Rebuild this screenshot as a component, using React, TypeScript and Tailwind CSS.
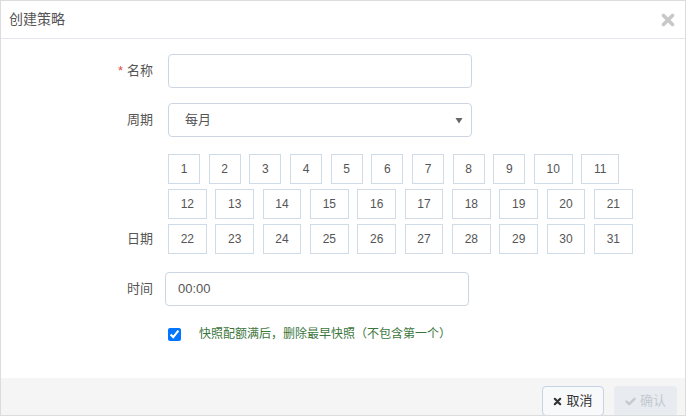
const days = Array.from({ length: 31 }, (_, i) => i + 1)

function Label({ children, required }: { children: React.ReactNode; required?: boolean }) {
  return (
    <div className="w-[152px] shrink-0 text-right text-[13px] text-[#555]">
      {required && <span className="text-[#e5484d] mr-1">*</span>}
      {children}
    </div>
  )
}

export default function App() {
  return (
    <div
      className="w-[686px] h-[416px] bg-white border border-[#dcdcdc] flex flex-col overflow-hidden"
      style={{ fontFamily: '"Liberation Sans", "Noto Sans CJK SC", sans-serif' }}
    >
      {/* Header */}
      <div className="h-[38px] shrink-0 border-b border-[#e3e6ea] flex items-center justify-between pl-2 pr-[10px]">
        <h1 className="text-[14px] text-[#555]">创建策略</h1>
        <svg className="w-[14px] h-[14px]" viewBox="0 0 14 14" aria-hidden="true">
          <path d="M2.5 2.5 L11.5 11.5 M11.5 2.5 L2.5 11.5" stroke="#c8c8c8" strokeWidth={3.6} strokeLinecap="round" />
        </svg>
      </div>

      {/* Body */}
      <div className="flex-1 pt-[15px]">
        <div className="flex items-center h-[34px]">
          <Label required>名称</Label>
          <input className="ml-[15px] w-[304px] h-[34px] rounded border border-[#ccd6e1] px-3 text-[13px] outline-none" />
        </div>

        <div className="flex items-center h-[34px] mt-[15px]">
          <Label>周期</Label>
          <div className="ml-[15px] w-[304px] h-[34px] rounded border border-[#ccd6e1] pl-4 pr-[8px] flex items-center justify-between text-[13px] text-[#555]">
            <span>每月</span>
            <svg className="w-[8px] h-[7px]" viewBox="0 0 8 7" aria-hidden="true">
              <path d="M0.5 1 L7.5 1 L4 6.5 Z" fill="#666" />
            </svg>
          </div>
        </div>

        <div className="flex items-end mt-[17px]">
          <div className="h-[30px] flex items-center">
            <Label>日期</Label>
          </div>
          <div className="ml-[15px] w-[485px] flex flex-wrap gap-x-[8.6px] gap-y-[5px]">
            {days.map(d => (
              <div
                key={d}
                className="h-[30px] px-[11.7px] border border-[#cfdbe7] flex items-center justify-center text-[12px] text-[#555]"
              >
                {d}
              </div>
            ))}
          </div>
        </div>

        <div className="flex items-center h-[34px] mt-[18px]">
          <Label>时间</Label>
          <div className="ml-[12px] w-[304px] h-[34px] rounded border border-[#ccd6e1] pl-3 flex items-center text-[13px] text-[#555]">
            00:00
          </div>
        </div>

        <div className="flex items-center mt-[19px] ml-[167px]">
          <input type="checkbox" checked readOnly className="w-[13px] h-[13px] m-0" />
          <span className="ml-[18px] text-[12px] text-[#3c763d]">快照配额满后，删除最早快照（不包含第一个）</span>
        </div>
      </div>

      {/* Footer */}
      <div className="h-[37px] shrink-0 bg-[#f5f5f5] flex items-start justify-end gap-[10px] pt-2 pr-[8px]">
        <button className="h-[30px] w-[62px] rounded border border-[#c5d3e2] bg-[#f8f9fb] flex items-center justify-center gap-1 text-[13px] text-[#333]">
          <svg className="w-[9px] h-[9px]" viewBox="0 0 10 10" aria-hidden="true">
            <path d="M2 2 L8 8 M8 2 L2 8" stroke="#333" strokeWidth={2.4} strokeLinecap="round" />
          </svg>
          取消
        </button>
        <button className="h-[30px] w-[63px] rounded bg-[#e8ebef] flex items-center justify-center gap-1 text-[13px] text-[#c4cad1]">
          <svg className="w-[11px] h-[9px]" viewBox="0 0 11 9" aria-hidden="true">
            <path d="M1.5 4.5 L4.2 7.2 L9.5 1.8" stroke="#c4cad1" strokeWidth={2.4} fill="none" strokeLinecap="round" strokeLinejoin="round" />
          </svg>
          确认
        </button>
      </div>
    </div>
  )
}
